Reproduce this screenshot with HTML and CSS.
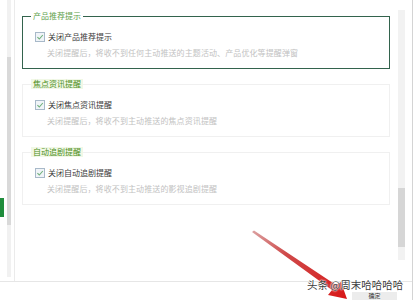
FILE: index.html
```html
<!DOCTYPE html>
<html lang="zh">
<head>
<meta charset="utf-8">
<link rel="stylesheet" href="styles.css">
</head>
<body>
<div class="window">
  <div class="body">
    <div class="sidebar">
      <div class="tab-col"><div class="tab"></div></div>
      <div class="sscroll"><div class="sthumb"></div></div>
    </div>
    <div class="main">
      <fieldset class="group active">
        <legend>产品推荐提示</legend>
        <div class="row"><span class="cb"><svg viewBox="0 0 10 10" width="10" height="10"><path d="M2.4 5.2 L4.3 7 L7.8 3" fill="none" stroke="#6fb07a" stroke-width="1.1"/></svg></span><span class="label">关闭产品推荐提示</span></div>
        <div class="desc">关闭提醒后，将收不到任何主动推送的主题活动、产品优化等提醒弹窗</div>
      </fieldset>
      <fieldset class="group">
        <legend class="hl">焦点资讯提醒</legend>
        <div class="row"><span class="cb"><svg viewBox="0 0 10 10" width="10" height="10"><path d="M2.4 5.2 L4.3 7 L7.8 3" fill="none" stroke="#6fb07a" stroke-width="1.1"/></svg></span><span class="label">关闭焦点资讯提醒</span></div>
        <div class="desc">关闭提醒后，将收不到主动推送的焦点资讯提醒</div>
      </fieldset>
      <fieldset class="group">
        <legend class="hl">自动追剧提醒</legend>
        <div class="row"><span class="cb"><svg viewBox="0 0 10 10" width="10" height="10"><path d="M2.4 5.2 L4.3 7 L7.8 3" fill="none" stroke="#6fb07a" stroke-width="1.1"/></svg></span><span class="label">关闭自动追剧提醒</span></div>
        <div class="desc">关闭提醒后，将收不到主动推送的影视追剧提醒</div>
      </fieldset>
    </div>
    <div class="vscroll"><div class="vtrack"><div class="vthumb"></div></div></div>
    <div class="rgap"></div>
  </div>
  <div class="footer">
    <div class="btn"><span class="btn-text">确定</span></div>
  </div>
</div>
<svg class="arrow" width="417" height="300" viewBox="0 0 417 300">
  <defs>
    <linearGradient id="ag" x1="252" y1="232" x2="345" y2="298" gradientUnits="userSpaceOnUse">
      <stop offset="0" stop-color="#dba0a0"/>
      <stop offset="0.35" stop-color="#cf4a4a"/>
      <stop offset="1" stop-color="#d81818"/>
    </linearGradient>
  </defs>
  <polygon points="252,232 254,230.5 336,285 341,282 347,299 328,295 332,290" fill="url(#ag)"/>
</svg>
<div class="watermark">头条 @周末哈哈哈哈</div>
</body>
</html>
```
FILE: styles.css
```css
html, body {
  margin: 0;
  padding: 0;
  background: #ffffff;
}
body {
  width: 417px;
  height: 300px;
  overflow: hidden;
  position: relative;
  font-family: "Noto Sans CJK SC", "Noto Sans", sans-serif;
}
.window {
  width: 412px;
  height: 300px;
  border-right: 1px solid #d4d4d4;
  display: flex;
  flex-direction: column;
}
.body {
  height: 281px;
  border-bottom: 1px solid #e6e6e6;
  display: flex;
}
.sidebar {
  width: 14px;
  border-right: 1px solid #ebebeb;
  display: flex;
  gap: 3px;
}
.tab-col {
  width: 4px;
  padding-top: 198px;
}
.tab {
  width: 4px;
  height: 19px;
  background: #1f8d3c;
}
.sscroll {
  width: 4px;
  height: 277px;
  background: #f1f1f1;
  padding-top: 57px;
  box-sizing: border-box;
}
.sthumb {
  height: 168px;
  background: #d9d9d9;
}
.main {
  width: 383px;
  box-sizing: border-box;
  padding: 11px 8px 0 7px;
  display: flex;
  flex-direction: column;
  gap: 10px;
}
.group {
  margin: 0;
  padding: 11px 8px 10px 12px;
  border: 1px solid #f0f0f0;
  min-width: 0;
}
.group.active {
  border-color: #33634d;
}
legend {
  padding: 0 2px;
  margin-left: -4px;
  font-size: 8px;
  line-height: 10px;
  height: 10px;
  color: #5e9f4c;
}
legend.hl {
  color: #4d8f22;
  background: #f1f8e6;
}
.row {
  display: flex;
  align-items: center;
  gap: 3px;
  height: 10px;
}
.cb {
  width: 10px;
  height: 10px;
  box-sizing: border-box;
  border: 1px solid #a8b9c9;
  background: #f0f4f8;
  display: flex;
  align-items: center;
  justify-content: center;
  overflow: hidden;
}
.cb svg {
  flex: none;
}
.label {
  font-size: 8px;
  line-height: 10px;
  color: #3a3a3a;
}
.desc {
  margin-top: 6px;
  margin-left: 12px;
  font-size: 8px;
  line-height: 10px;
  color: #c2c2c2;
  white-space: nowrap;
  letter-spacing: 0.1px;
}
.vscroll {
  width: 7px;
  padding-top: 10px;
}
.vtrack {
  height: 250px;
  background: #f2f2f2;
  padding-top: 178px;
  box-sizing: border-box;
}
.vthumb {
  height: 59px;
  background: #d6d6d6;
}
.rgap {
  width: 7px;
}
.footer {
  flex: 1;
  display: flex;
  justify-content: flex-end;
  padding: 10px 15px 0 0;
}
.btn {
  width: 45px;
  height: 8px;
  background: #ececec;
  display: flex;
  justify-content: center;
  padding-top: 1px;
  box-sizing: border-box;
}
.btn-text {
  font-size: 6px;
  line-height: 6px;
  height: 6px;
  color: #333;
}
.arrow {
  position: absolute;
  left: 0;
  top: 0;
}
.watermark {
  position: absolute;
  left: 307px;
  top: 279px;
  font-size: 10.5px;
  line-height: 11px;
  color: #3c3c3c;
  white-space: nowrap;
  text-shadow: 0 0 2px #fff, 0 0 2px #fff, 0 0 1px #fff;
}
```
